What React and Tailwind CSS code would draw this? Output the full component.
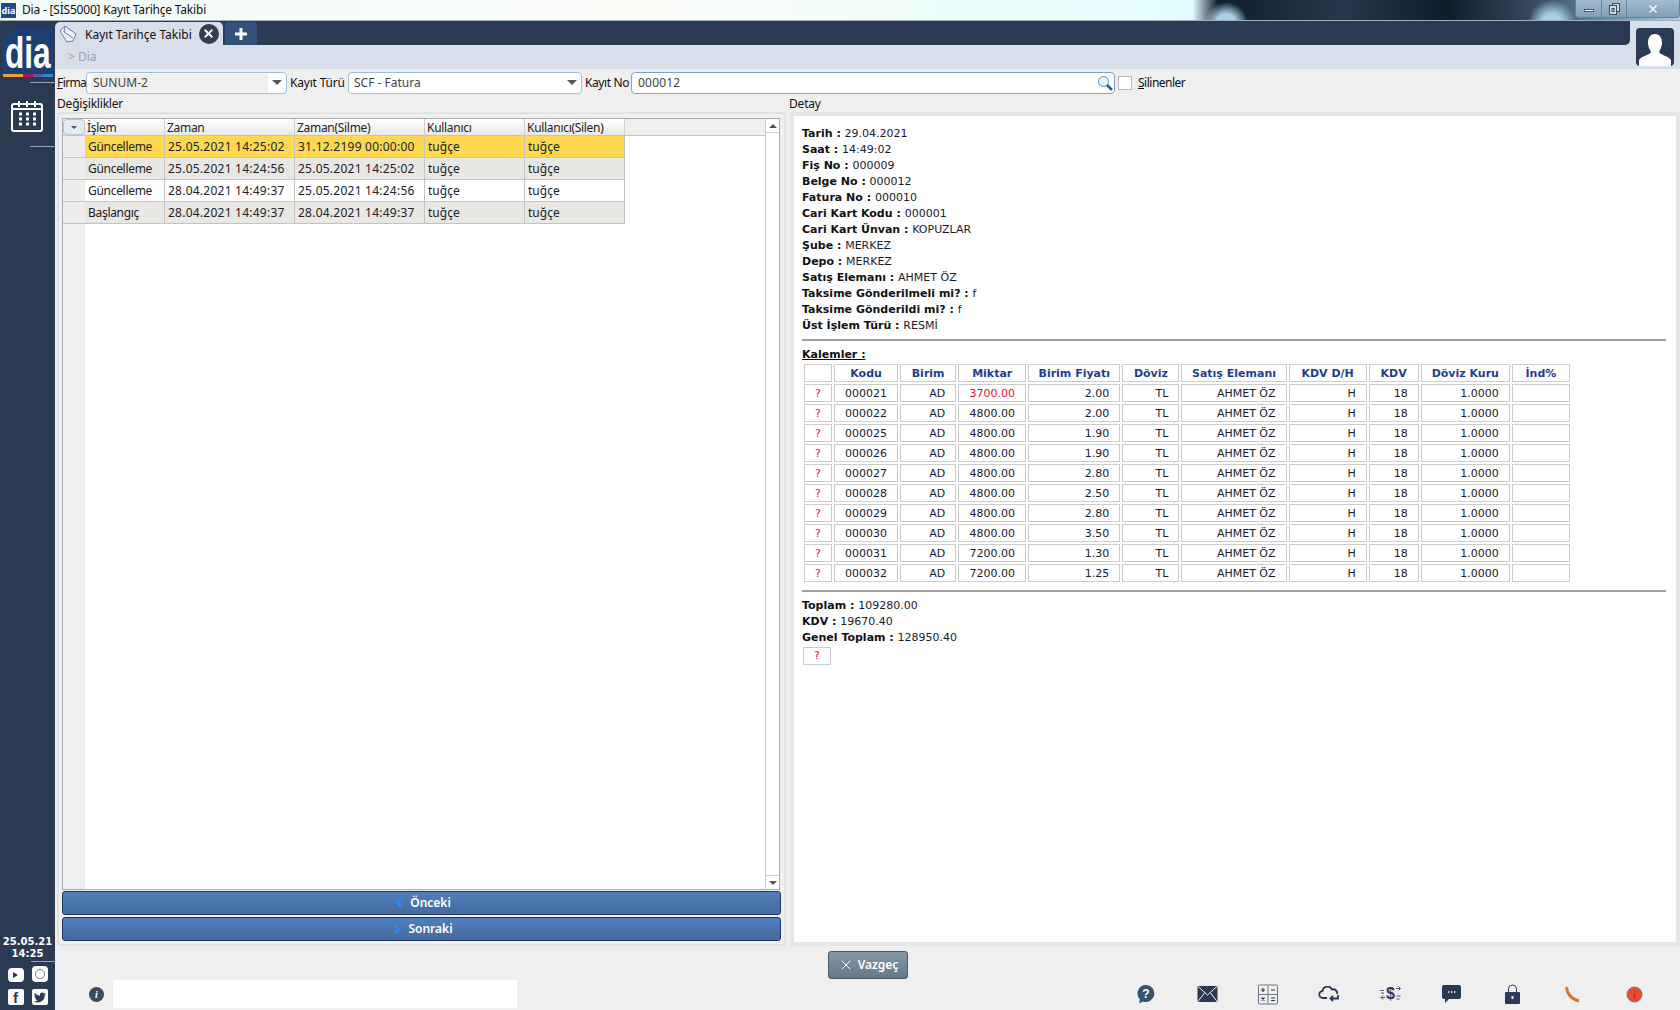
import { ChevronLeft, ChevronRight, X } from "lucide-react";

const historyRows = [
  ["Güncelleme", "25.05.2021 14:25:02", "31.12.2199 00:00:00", "tuğçe", "tuğçe"],
  ["Güncelleme", "25.05.2021 14:24:56", "25.05.2021 14:25:02", "tuğçe", "tuğçe"],
  ["Güncelleme", "28.04.2021 14:49:37", "25.05.2021 14:24:56", "tuğçe", "tuğçe"],
  ["Başlangıç", "28.04.2021 14:49:37", "28.04.2021 14:49:37", "tuğçe", "tuğçe"],
];

const info = [
  ["Tarih", "29.04.2021"],
  ["Saat", "14:49:02"],
  ["Fiş No", "000009"],
  ["Belge No", "000012"],
  ["Fatura No", "000010"],
  ["Cari Kart Kodu", "000001"],
  ["Cari Kart Ünvan", "KOPUZLAR"],
  ["Şube", "MERKEZ"],
  ["Depo", "MERKEZ"],
  ["Satış Elemanı", "AHMET ÖZ"],
  ["Taksime Gönderilmeli mi?", "f"],
  ["Taksime Gönderildi mi?", "f"],
  ["Üst İşlem Türü", "RESMİ"],
];

const items = [
  ["000021", "3700.00", "2.00"],
  ["000022", "4800.00", "2.00"],
  ["000025", "4800.00", "1.90"],
  ["000026", "4800.00", "1.90"],
  ["000027", "4800.00", "2.80"],
  ["000028", "4800.00", "2.50"],
  ["000029", "4800.00", "2.80"],
  ["000030", "4800.00", "3.50"],
  ["000031", "7200.00", "1.30"],
  ["000032", "7200.00", "1.25"],
];

const heads = ["", "Kodu", "Birim", "Miktar", "Birim Fiyatı", "Döviz", "Satış Elemanı", "KDV D/H", "KDV", "Döviz Kuru", "İnd%"];
const tdBase = "h-[18px] border border-[#cccccc] p-0 pr-[10px] leading-none";

function Info({ label, value }) {
  return (
    <div className="h-4 leading-4 whitespace-nowrap">
      <b className="text-[#111]">{label} : </b>{value}
    </div>
  );
}

function Caret({ className }) {
  return <div className={"w-0 h-0 border-x-[5px] border-x-transparent border-t-[5px] border-t-[#555] " + className} />;
}

function HistoryGrid() {
  return (
    <div className="flex-1 min-h-0 flex border border-[#a9a9a9] ml-[3px] mt-1 mr-1 bg-white font-['Noto_Sans',sans-serif] text-[12px] text-[#222]">
      <div className="flex-1 min-w-0 relative flex flex-col">
        <div className="flex h-[16px] bg-gradient-to-b from-white to-[#e8e8e8] shrink-0">
          <div className="w-[22px] flex items-center justify-center border border-[#b8c4d4] rounded-sm bg-[#e6ebf2]"><Caret className="!border-x-[3px] !border-t-[3px]" /></div>
          {[["İşlem", "w-[80px]"], ["Zaman", "w-[130px]"], ["Zaman(Silme)", "w-[130px]"], ["Kullanıcı", "w-[100px]"], ["Kullanıcı(Silen)", "w-[100px]"]].map(([h, w]) => (
            <div key={h} className={w + " px-[2px] leading-[18px] border-r border-[#cfcfcf] tracking-[-0.3px]"}>{h}</div>
          ))}
          <div className="flex-1 bg-[#efefef]" />
        </div>
        <div className="flex-1 flex min-h-0">
          <div className="w-[22px] shrink-0 bg-[#efefef] flex flex-col border-t border-[#c4c4c4]">
            {historyRows.map((r, i) => (
              <div key={i} className="h-[22px] border-b border-[#c4c4c4] bg-[#eeeeee]" />
            ))}
          </div>
          <div className="flex-1 flex flex-col border-t border-[#c4c4c4]">
            {historyRows.map((r, i) => (
              <div key={i} className={"flex h-[22px] w-[540px] border-b border-[#c4c4c4] " + (i === 0 ? "bg-[#ffd850]" : i === 2 ? "bg-white" : "bg-[#e8e7e3]")}>
                <div className="w-[80px] px-[3px] leading-[21px] border-r border-[#c4c4c4] tracking-[-0.3px]">{r[0]}</div>
                <div className="w-[130px] px-[3px] leading-[21px] border-r border-[#c4c4c4] tracking-[0.24px]">{r[1]}</div>
                <div className="w-[130px] px-[3px] leading-[21px] border-r border-[#c4c4c4] tracking-[0.24px]">{r[2]}</div>
                <div className="w-[100px] px-[3px] leading-[21px] border-r border-[#c4c4c4]">{r[3]}</div>
                <div className="w-[100px] px-[3px] leading-[21px] border-r border-[#c4c4c4]">{r[4]}</div>
              </div>
            ))}
          </div>
        </div>
      </div>
      <div className="w-[14px] shrink-0 border-l border-[#cfcfcf] bg-white flex flex-col justify-between">
        <div className="h-[14px] border-b border-[#cfcfcf] flex items-center justify-center"><div className="w-0 h-0 border-x-[4px] border-x-transparent border-b-[4px] border-b-[#555]" /></div>
        <div className="h-[14px] border-t border-[#cfcfcf] flex items-center justify-center"><Caret className="!border-x-[4px] !border-t-[4px]" /></div>
      </div>
    </div>
  );
}

function NavButton({ icon, label }) {
  return (
    <button className="h-[24px] w-full flex items-center justify-center gap-[4px] rounded-[3px] border border-[#1d3563] bg-gradient-to-b from-[#5180bd] to-[#44699e] text-white font-['Noto_Sans',sans-serif] font-semibold text-[12px]">
      {icon}
      {label}
    </button>
  );
}

function DetailTable() {
  return (
    <table className="table-fixed w-[770px] border-separate border-spacing-x-[2px] border-spacing-y-[2px] -mt-px text-[11px]">
      <colgroup>
        {["w-[28px]", "w-[64px]", "w-[56px]", "w-[68px]", "w-[92px]", "w-[57px]", "w-[105px]", "w-[78px]", "w-[50px]", "w-[89px]", "w-[58px]"].map((w, i) => (
          <col key={i} className={w} />
        ))}
      </colgroup>
      <thead>
        <tr>
          {heads.map((h, i) => (
            <th key={i} className="h-[18px] border border-[#cccccc] p-0 text-center leading-none font-bold text-[#1e3f8f]">{h}</th>
          ))}
        </tr>
      </thead>
      <tbody>
        {items.map((it, i) => (
          <tr key={i}>
            <td className="h-[18px] border border-[#cccccc] p-0 text-center leading-none text-[#e8102e]">?</td>
            <td className="h-[18px] border border-[#cccccc] p-0 text-center leading-none">{it[0]}</td>
            <td className={tdBase + " text-right"}>AD</td>
            <td className={"h-[18px] border border-[#cccccc] p-0 text-center leading-none " + (i === 0 ? "text-[#e8102e]" : "")}>{it[1]}</td>
            <td className={tdBase + " text-right"}>{it[2]}</td>
            <td className={tdBase + " text-right"}>TL</td>
            <td className={tdBase + " text-right"}>AHMET ÖZ</td>
            <td className={tdBase + " text-right"}>H</td>
            <td className={tdBase + " text-right"}>18</td>
            <td className={tdBase + " text-right"}>1.0000</td>
            <td className={tdBase}></td>
          </tr>
        ))}
      </tbody>
    </table>
  );
}

function BottomIcon({ children }) {
  return <div className="w-8 h-6 flex items-center justify-center">{children}</div>;
}

function StatusIcons() {
  const navy = "#2a3a55";
  return (
    <div className="flex items-center gap-[29px] mr-[30px] mb-[2px]">
      <BottomIcon>
        <svg width="20" height="20" viewBox="0 0 20 20"><path d="M10 1a8.500 8.500 0 1 1-3 16.500L3 19.500l1-4A8.500 8.500 0 0 1 10 1z" fill="#35536d" /><text x="10" y="14" textAnchor="middle" fontSize="12" fontWeight="bold" fill="#fff" fontFamily="Liberation Sans">?</text></svg>
      </BottomIcon>
      <BottomIcon>
        <svg width="21" height="16" viewBox="0 0 20 16"><rect width="20" height="16" fill={navy} /><path d="M0 0l10 9 10-9M0 16l7-9M20 16l-7-9" stroke="#efefef" strokeWidth="1" fill="none" /></svg>
      </BottomIcon>
      <BottomIcon>
        <svg width="20" height="21" viewBox="0 0 20 20" fill="none"><rect x=".5" y=".5" width="19" height="19" rx="1" stroke="#6d7888" /><path d="M10 1v18M1 10h18" stroke="#6d7888" /><path d="M3 5.500h4M5 3.500v4M13 5.500h4M3.500 13l3 3M6.500 13l-3 3M13 13.500h4M13 16h4" stroke={navy} strokeWidth="1.200" /></svg>
      </BottomIcon>
      <BottomIcon>
        <svg width="22" height="16" viewBox="0 0 22 16" fill="none" stroke={navy} strokeWidth="1.800"><path d="M9 12H5a3.500 3.500 0 0 1-.5-7A5 5 0 0 1 14 3.500 3.800 3.800 0 0 1 19 8" /><path d="M20 9v3.500H13M15 10l-2.500 2.500L15 15" /></svg>
      </BottomIcon>
      <BottomIcon>
        <svg width="21" height="20" viewBox="0 0 21 20" fill="none" stroke="#4a5a70" strokeWidth="1"><text x="10.500" y="15" textAnchor="middle" fontSize="16" fontWeight="bold" fill={navy} stroke="none" fontFamily="Liberation Sans">$</text><path d="M0 6.500h4M1 9h3M16 4.500h4.500M18.500 2.500l2 2-2 2M1 13.500h4M3 11.500l-2 2 2 2M16.500 12h4M16.500 15h3" /></svg>
      </BottomIcon>
      <BottomIcon>
        <svg width="19" height="18" viewBox="0 0 19 18"><path d="M2 0h15a2 2 0 0 1 2 2v10a2 2 0 0 1-2 2H7l-4 4v-4H2a2 2 0 0 1-2-2V2a2 2 0 0 1 2-2z" fill={navy} /><path d="M6 7h1.400M9 7h1.400M12 7h1.400" stroke="#fff" strokeWidth="1.400" /></svg>
      </BottomIcon>
      <BottomIcon>
        <svg width="15" height="20" viewBox="0 0 15 20"><path d="M3.500 9V5a4 4 0 0 1 8 0v4" fill="none" stroke={navy} /><rect y="8" width="15" height="12" rx="1" fill={navy} /><rect x="6.500" y="12" width="2" height="3" fill="#fff" /></svg>
      </BottomIcon>
      <BottomIcon>
        <svg width="16" height="17" viewBox="0 0 16 17" fill="none"><path d="M2 1c-1 4 3 12 12 14" stroke="#d2752f" strokeWidth="3" /></svg>
      </BottomIcon>
      <BottomIcon>
        <svg width="17" height="17" viewBox="0 0 17 17"><circle cx="8.500" cy="8.500" r="7.500" fill="#ef4b30" stroke="#777" /><path d="M8.500 4v1.500M8.500 7.500v5" stroke="#b63020" strokeWidth="1.400" /></svg>
      </BottomIcon>
    </div>
  );
}

export default function App() {
  return (
    <div className="w-[1680px] h-[1010px] overflow-hidden flex flex-col bg-[#efefef] font-['Noto_Sans',sans-serif] text-[12px] text-[#222]">
      {/* window title */}
      <div className="relative h-[21px] shrink-0 flex items-center bg-[radial-gradient(circle_at_1226px_24px,#a9cfe6_0,#a9cfe6_10px,transparent_22px),radial-gradient(circle_at_1552px_24px,#a9cfe6_0,#a9cfe6_10px,transparent_24px),linear-gradient(90deg,#f2fbf7_0%,#fbfdf9_40%,#eafcfb_60%,#e6fdff_68%,#dffbff_71%,#0f1e2c_72.500%,#26384a_80%,#0f1c2a_86%,#34485c_91%,#6a90ad_96%,#b0cee2_100%)] border-b border-[#9fb0bc]">
        <div className="w-[15px] h-[15px] ml-[1px] bg-[#1f4a86] text-white text-[9px] font-bold leading-[15px] text-center shrink-0">dia</div>
        <span className="ml-[6px] text-[#111] text-[12px] tracking-[-0.2px]">Dia - [SİS5000] Kayıt Tarihçe Takibi</span>
        <div className="absolute right-0 top-0 h-[18px] w-[105px] flex rounded-b-[4px] border border-t-0 border-[#6c8196] bg-gradient-to-b from-[#a3bdd2] to-[#7f9db6]">
          <div className="w-[26px] flex items-center justify-center border-r border-[#6c8196]"><div className="w-[10px] h-[3px] bg-white border border-[#555] mt-[3px]" /></div>
          <div className="w-[25px] flex items-center justify-center border-r border-[#6c8196]">
            <svg width="11" height="12" viewBox="0 0 11 12" fill="none" stroke="#3f4a55"><rect x="3.500" y=".5" width="7" height="8" fill="#cfdce6" /><rect x=".5" y="2.500" width="7" height="9" fill="#cfdce6" /><rect x="3" y="5.500" width="2" height="3" /></svg>
          </div>
          <div className="flex-1 flex items-center justify-center"><X size={12} strokeWidth={3.5} className="text-[#f4f4f4]" /></div>
        </div>
      </div>

      <div className="flex-1 min-h-0 flex">
        {/* left rail */}
        <aside className="w-[55px] shrink-0 bg-[#2a3a52] flex flex-col items-center text-white">
          <div className="w-[50px] h-[50px] mt-[6px] ml-[1px] relative overflow-hidden bg-[#1e3f72] [clip-path:polygon(28%_0,100%_0,100%_100%,0_100%,0_22%)] flex items-end justify-center">
            <span className="font-['Liberation_Sans',sans-serif] font-bold text-[44px] leading-[44px] mb-[2px] scale-x-[0.72] text-white">dia</span>
            <div className="absolute bottom-0 inset-x-0 h-[3px] bg-[linear-gradient(90deg,#f0a13a_0_40%,#b3144f_40%_60%,#5f5aa8_60%_80%,#2d8ad0_80%)]" />
          </div>
          <div className="self-end w-[25px] h-px bg-[#9aa7b8] mt-[5px]" />
          <svg className="mt-[17px] -ml-px" width="32" height="32" viewBox="0 0 32 32" fill="none" stroke="#fff" strokeWidth="2"><rect x="1" y="4" width="30" height="27" rx="2" /><path d="M8 1v6M16 1v6M24 1v6M1 9h30" /><path d="M8 14h3M15 14h3M22 14h3M8 19h3M15 19h3M22 19h3M8 24h3M15 24h3M22 24h3" strokeWidth="3" /></svg>
          <div className="self-end w-[25px] h-px bg-[#9aa7b8] mt-[14px]" />
          <div className="mt-auto w-full text-center font-['DejaVu_Sans',sans-serif] font-bold text-[10px] leading-[12px]">
            <div>25.05.21</div>
            <div>14:25</div>
          </div>
          <div className="self-end w-[24px] h-px bg-[#9aa7b8] mt-[1px]" />
          <div className="grid grid-cols-2 gap-x-[8px] gap-y-[7px] mt-[4px] mb-[5px]">
            <div className="w-[16px] h-[14px] mt-[2px] rounded-[4px] bg-white flex items-center justify-center"><div className="w-0 h-0 border-y-[3px] border-y-transparent border-l-[5px] border-l-[#2a3a52]" /></div>
            <div className="w-[16px] h-[16px] rounded-[4px] bg-white flex items-center justify-center"><div className="w-[10px] h-[10px] rounded-full border border-[#7b8794]" /></div>
            <div className="w-[16px] h-[16px] rounded-[2px] bg-white flex items-end justify-center"><span className="font-['Liberation_Sans',sans-serif] font-bold text-[15px] leading-[15px] text-[#2a3a52]">f</span></div>
            <div className="w-[16px] h-[16px] rounded-[2px] bg-white flex items-center justify-center">
              <svg width="12" height="11" viewBox="0 0 24 20"><path d="M24 2.500c-.9.4-1.800.7-2.800.8 1-.6 1.800-1.600 2.200-2.700-1 .6-2 1-3.100 1.200A4.900 4.900 0 0 0 11.900 6.300 13.900 13.900 0 0 1 1.700 1.100a4.900 4.900 0 0 0 1.500 6.600c-.8 0-1.600-.2-2.200-.6 0 2.400 1.700 4.400 3.900 4.900-.7.200-1.500.2-2.200.1.600 2 2.400 3.400 4.600 3.400A9.900 9.900 0 0 1 0 17.500 14 14 0 0 0 21.500 5.100c1-.7 1.800-1.600 2.500-2.600z" fill="#2a3a52" /></svg>
            </div>
          </div>
        </aside>

        <main className="flex-1 min-w-0 flex flex-col">
          {/* tabs + breadcrumb */}
          <div className="h-[48px] shrink-0 bg-[#d8deea] relative flex flex-col">
            <div className="h-[24px] w-[1575px] bg-[#2a3a52] rounded-br-[5px] flex items-end shrink-0">
              <div className="h-[23px] w-[168px] bg-[#d8deea] rounded-t-[5px] flex items-center">
                <svg className="ml-[4px]" width="18" height="18" viewBox="0 0 18 18" fill="none" stroke="#5b7fb5"><path d="M1 6l5-5 11 8-3 7-6 1z" fill="#eef2f8" /><path d="M6 1l-1 6 9 6" /></svg>
                <span className="ml-[8px] mt-[2px] text-[12px] text-[#111] whitespace-nowrap">Kayıt Tarihçe Takibi</span>
                <div className="ml-[7px] w-[20px] h-[20px] rounded-full bg-[#2f4055] flex items-center justify-center"><X size={13} strokeWidth={3.5} className="text-white" /></div>
              </div>
              <div className="ml-[2px] h-[23px] w-[32px] bg-[#33517a] rounded-t-[4px] flex items-center justify-center">
                <svg width="14" height="14" viewBox="0 0 14 14"><path d="M7 1v12M1 7h12" stroke="#fff" strokeWidth="3" /></svg>
              </div>
            </div>
            <div className="pl-[13px] pt-[3px] text-[#9aa2ae] text-[12px]">&gt; Dia</div>
            <div className="absolute right-[6px] top-[7px] w-[38px] h-[38px] rounded-[4px] bg-[#2a3a52] overflow-hidden flex items-end justify-center">
              <svg width="32" height="34" viewBox="0 0 32 34"><path d="M16 2c5 0 7 4 7 9 0 4-2 7-3 9 1 3 10 4 12 8v6H0v-6c2-4 11-5 12-8-1-2-3-5-3-9 0-5 2-9 7-9z" fill="#fff" /></svg>
            </div>
          </div>

          {/* filter row */}
          <div className="h-[26px] pt-px shrink-0 flex items-center pl-[2px] text-[12px] text-[#111]">
            <span className="w-[29px] tracking-[-0.6px]"><u>F</u>irma</span>
            <div className="w-[201px] h-[22px] border border-[#9dbde0] rounded-[4px] bg-white flex items-center pl-[6px] text-[#444]">
              <span className="flex-1 bg-[#efefef] -my-px h-[18px] leading-[18px] -ml-[2px] pl-[2px]">SUNUM-2</span>
              <Caret className="mx-[4px]" />
            </div>
            <span className="ml-[3px] w-[58px] whitespace-nowrap tracking-[-0.2px]">Kayıt Türü</span>
            <div className="w-[234px] h-[22px] border border-[#9dbde0] rounded-[4px] bg-white flex items-center pl-[5px] text-[#444]">
              <span className="flex-1">SCF - Fatura</span>
              <Caret className="mx-[4px]" />
            </div>
            <span className="ml-[3px] w-[46px] whitespace-nowrap tracking-[-0.4px]">Kayıt No</span>
            <div className="w-[484px] h-[22px] border border-[#7fa2cf] rounded-[4px] bg-white flex items-center pl-[6px] text-[#444] tracking-[0.2px]">
              <span className="flex-1">000012</span>
              <svg className="mr-px" width="16" height="16" viewBox="0 0 16 16" fill="none"><circle cx="6.500" cy="6.500" r="5" stroke="#4b8ec9" fill="#eaf4fb" /><path d="M10 10l5 5" stroke="#255d92" strokeWidth="2.500" /></svg>
            </div>
            <div className="ml-[3px] w-[14px] h-[14px] border border-[#bbb] bg-white" />
            <span className="ml-[6px] tracking-[-0.5px]"><u>S</u>ilinenler</span>
          </div>

          {/* panels */}
          <div className="flex-1 min-h-0 flex">
            <section className="w-[729px] shrink-0 ml-[2px] flex flex-col">
              <div className="h-[17px] leading-[18px] tracking-[-0.2px] text-[#111]">Değişiklikler</div>
              <div className="h-[834px] border-2 border-[#e2e2e2] rounded-sm flex flex-col pb-[3px]">
                <HistoryGrid />
                <div className="flex flex-col gap-[2px] mt-px ml-[3px] mr-[3px]">
                  <NavButton icon={<ChevronLeft size={14} strokeWidth={4} className="text-[#2a8cff]" />} label="Önceki" />
                  <NavButton icon={<ChevronRight size={14} strokeWidth={4} className="text-[#2a8cff]" />} label="Sonraki" />
                </div>
              </div>
            </section>
            <section className="flex-1 min-w-0 ml-[4px] flex flex-col">
              <div className="h-[17px] leading-[18px] tracking-[-0.2px] text-[#111] -ml-px">Detay</div>
              <div className="h-[834px] border-4 border-[#e6e6e6] bg-white pl-[8px] pt-[10px] pr-[10px] font-['DejaVu_Sans',sans-serif] text-[11px] text-[#1a1a2e]">
                {info.map(([k, v]) => <Info key={k} label={k} value={v} />)}
                <div className="h-[2px] bg-[#a0a0a0] mt-[5px]" />
                <div className="mt-[6px] h-4 leading-4 font-bold text-[#111] underline">Kalemler :</div>
                <DetailTable />
                <div className="h-[2px] bg-[#a0a0a0] mt-[6px]" />
                <div className="mt-[6px]">
                  <Info label="Toplam" value="109280.00" />
                  <Info label="KDV" value="19670.40" />
                  <Info label="Genel Toplam" value="128950.40" />
                </div>
                <div className="w-[28px] h-[18px] mt-[1px] ml-px border border-[#cccccc] text-center leading-[16px] text-[#e8102e]">?</div>
              </div>
            </section>
          </div>

          {/* footer */}
          <div className="relative h-[62px] shrink-0 flex items-end pb-[2px]">
            <button className="absolute left-[773px] top-[3px] w-[80px] h-[28px] rounded-[3px] border border-[#475a6c] bg-gradient-to-b from-[#8497a5] to-[#66798a] flex items-center justify-center gap-[4px] text-white font-semibold text-[12px]">
              <X size={16} strokeWidth={1.5} />
              Vazgeç
            </button>
            <div className="ml-[34px] mb-[6px] w-[15px] h-[15px] rounded-full bg-[#3b4c60] text-white text-[10px] font-bold italic font-['Liberation_Serif',serif] leading-[15px] text-center">i</div>
            <div className="ml-[9px] w-[404px] h-[28px] bg-white" />
            <div className="flex-1" />
            <StatusIcons />
          </div>
        </main>
      </div>
    </div>
  );
}
